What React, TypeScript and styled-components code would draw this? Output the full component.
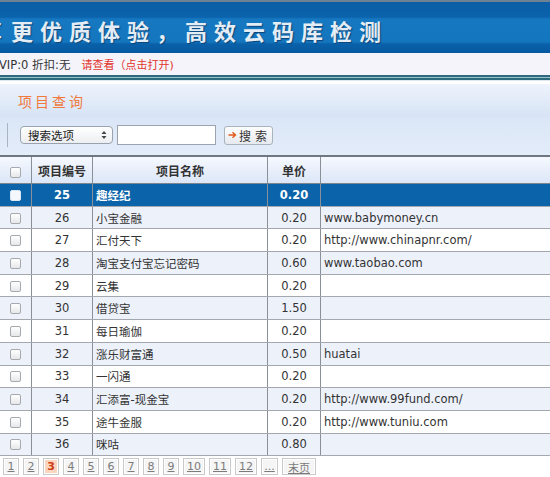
import React from 'react';
import styled, { createGlobalStyle } from 'styled-components';

const GlobalStyle = createGlobalStyle`
  html, body {
    margin: 0;
    padding: 0;
    background: #fff;
  }
  body {
    width: 550px;
    height: 477px;
    overflow: hidden;
    font-family: "DejaVu Sans", "Noto Sans CJK SC", sans-serif;
    font-size: 11.5px;
    color: #333;
  }
`;

const cjk = `"DejaVu Sans", "Noto Sans CJK SC", sans-serif`;

const Banner = styled.div`
  height: 53px;
  border-top: 2px solid #6d8393;
  background: linear-gradient(
    to bottom,
    #0b5ea5 0px,
    #0a63ac 15px,
    #1678c1 17px,
    #1476be 40px,
    #0a61a9 42px,
    #0659a0 51px,
    #7aa8cc 52px,
    #cfe0ee 53px
  );
  display: flex;
  align-items: center;
  padding-top: 4px;
  box-sizing: border-box;
  overflow: hidden;
`;

const BannerTitle = styled.div`
  margin-left: -20px;
  white-space: nowrap;
  font-family: "Noto Sans CJK SC", sans-serif;
  font-size: 22px;
  font-weight: 700;
  letter-spacing: 7px;
  color: #e4edf6;
  text-shadow: 1px 1px 1px #0a4478;
`;

const Lead = styled.span`
  margin-right: 2px;
`;

const InfoBar = styled.div`
  height: 22px;
  background: #f5f4fb;
  display: flex;
  align-items: center;
  gap: 11px;
  font-family: ${cjk};
  font-size: 11.5px;
  color: #333;
`;

const InfoText = styled.span`
  margin-left: -1px;
`;

const RedLink = styled.span`
  color: #e2332a;
  font-size: 11px;
`;

const Divider = styled.div`
  height: 6px;
  background: linear-gradient(
    to bottom,
    #2c6a7e 0px,
    #2c6a7e 2px,
    #9cc0cc 2px,
    #9cc0cc 3px,
    #2c6a7e 3px,
    #2c6a7e 5px,
    #dfe8ee 5px
  );
`;

const Gap = styled.div`
  height: 3px;
  background: #fff;
`;

const PanelHead = styled.div`
  height: 33px;
  background: linear-gradient(to bottom, #eef3fc, #d6e3f5);
  display: flex;
  align-items: center;
  padding-left: 18px;
  font-family: "Noto Sans CJK SC", sans-serif;
  font-size: 14px;
  letter-spacing: 3px;
  color: #f07a3c;
`;

const Toolbar = styled.div`
  height: 38px;
  background: linear-gradient(to bottom, #dae6f7, #e3ecf9);
  display: flex;
  align-items: center;
  box-sizing: border-box;
  padding-left: 7px;
  padding-bottom: 2px;
`;

const Separator = styled.span`
  width: 1px;
  height: 24px;
  background: #a9b4c2;
  margin-right: 12px;
`;

const SelectBox = styled.div`
  width: 93px;
  height: 18px;
  box-sizing: border-box;
  border: 1px solid #9aa3ad;
  border-radius: 4px;
  background: linear-gradient(to bottom, #ffffff, #eceef1);
  display: flex;
  align-items: center;
  justify-content: space-between;
  padding: 0 5px 0 7px;
  font-family: ${cjk};
  font-size: 11.5px;
  color: #222;
`;

const SearchInput = styled.div`
  width: 99px;
  height: 20px;
  box-sizing: border-box;
  margin-left: 4px;
  border: 1px solid #9ba4ae;
  background: #fff;
`;

const SearchButton = styled.div`
  margin-left: 8px;
  width: 49px;
  height: 19px;
  box-sizing: border-box;
  border: 1px solid #aab2bc;
  border-radius: 3px;
  background: linear-gradient(to bottom, #fdfdfe, #e6eaef);
  display: flex;
  align-items: center;
  justify-content: center;
  gap: 2px;
  padding-left: 2px;
  font-family: "Noto Sans CJK SC", sans-serif;
  font-size: 12px;
  letter-spacing: 4px;
  color: #333;
`;

const Table = styled.table`
  width: 550px;
  border-collapse: collapse;
  table-layout: fixed;
  border-top: 2px solid #6f7780;
`;

const HeadCell = styled.th<{ $w?: number }>`
  ${(p) => (p.$w ? `width: ${p.$w}px;` : '')}
  height: 26px;
  padding: 0;
  background: linear-gradient(to bottom, #f5f8fe, #dbe6f7);
  border-right: 1px solid #8a9098;
  border-bottom: 1px solid #7d848c;
  font-family: "Noto Sans CJK SC", sans-serif;
  font-size: 12px;
  font-weight: 700;
  color: #333;
  text-align: center;
  &:last-child {
    border-right: none;
  }
`;

const Row = styled.tr<{ $active?: boolean; $alt?: boolean }>`
  height: 22.7px;
  background: ${(p) => (p.$active ? '#0b63a9' : p.$alt ? '#edf1fa' : '#ffffff')};
  color: ${(p) => (p.$active ? '#ffffff' : '#333')};
  font-weight: ${(p) => (p.$active ? 700 : 400)};
`;

const Cell = styled.td<{ $align?: string }>`
  padding: 0 3px;
  border-right: 1px solid #8a9098;
  border-bottom: 1px solid #a3a8ae;
  text-align: ${(p) => p.$align || 'left'};
  white-space: nowrap;
  overflow: hidden;
  font-family: ${cjk};
  font-size: 11.5px;
  &:last-child {
    border-right: none;
  }
`;

const Check = styled.span<{ $active?: boolean }>`
  display: inline-block;
  vertical-align: middle;
  width: 9px;
  height: 9px;
  border: 1px solid ${(p) => (p.$active ? '#dbe7f3' : '#a6a9ad')};
  border-radius: 2px;
  background: ${(p) =>
    p.$active ? '#f4f7fb' : 'linear-gradient(to bottom, #ffffff, #e6e7e9)'};
`;

const Pager = styled.div`
  display: flex;
  gap: 4px;
  padding: 2px 0 0 3px;
`;

const PageBox = styled.span<{ $current?: boolean; $w?: number }>`
  min-width: ${(p) => p.$w || 12}px;
  height: 15px;
  padding: 0 1px;
  box-sizing: content-box;
  border: 1px solid #c9c9c9;
  box-shadow: inset 0 0 0 1px #ffffff;
  background: ${(p) => (p.$current ? '#fbd6bf' : '#f5f5f5')};
  display: flex;
  align-items: center;
  justify-content: center;
  font-family: ${cjk};
  font-size: 11px;
  color: ${(p) => (p.$current ? '#cc3b14' : '#7b7b7b')};
  font-weight: ${(p) => (p.$current ? 700 : 400)};
  text-decoration: ${(p) => (p.$current ? 'none' : 'underline')};
`;

type Item = { id: number; name: string; price: string; url: string };

const items: Item[] = [
  { id: 25, name: '趣经纪', price: '0.20', url: '' },
  { id: 26, name: '小宝金融', price: '0.20', url: 'www.babymoney.cn' },
  { id: 27, name: '汇付天下', price: '0.20', url: 'http://www.chinapnr.com/' },
  { id: 28, name: '淘宝支付宝忘记密码', price: '0.60', url: 'www.taobao.com' },
  { id: 29, name: '云集', price: '0.20', url: '' },
  { id: 30, name: '借贷宝', price: '1.50', url: '' },
  { id: 31, name: '每日瑜伽', price: '0.20', url: '' },
  { id: 32, name: '涨乐财富通', price: '0.50', url: 'huatai' },
  { id: 33, name: '一闪通', price: '0.20', url: '' },
  { id: 34, name: '汇添富-现金宝', price: '0.20', url: 'http://www.99fund.com/' },
  { id: 35, name: '途牛金服', price: '0.20', url: 'http://www.tuniu.com' },
  { id: 36, name: '咪咕', price: '0.80', url: '' },
];

const pages = ['1', '2', '3', '4', '5', '6', '7', '8', '9', '10', '11', '12', '...', '末页'];

const pageWidth = (p: string) => {
  if (p === '末页') return 30;
  if (p === '...') return 13;
  return p.length > 1 ? 18 : 12;
};

const SelectArrows = () => (
  <svg width="6" height="10" viewBox="0 0 6 10">
    <path d="M0.5 4 L3 1 L5.5 4 Z" fill="#444" />
    <path d="M0.5 6 L3 9 L5.5 6 Z" fill="#444" />
  </svg>
);

const ArrowIcon = () => (
  <svg width="9" height="8" viewBox="0 0 9 8">
    <path d="M0.5 4 H7 M4.5 1.2 L7.5 4 L4.5 6.8" stroke="#e05a1c" strokeWidth="1.4" fill="none" />
  </svg>
);

export default function App() {
  return (
    <>
      <GlobalStyle />
      <Banner>
        <BannerTitle>
          <Lead>享</Lead>更优质体验，高效云码库检测
        </BannerTitle>
      </Banner>
      <InfoBar>
        <InfoText>VIP:0 折扣:无</InfoText>
        <RedLink>请查看（点击打开)</RedLink>
      </InfoBar>
      <Divider />
      <Gap />
      <PanelHead>项目查询</PanelHead>
      <Toolbar>
        <Separator />
        <SelectBox>
          <span>搜索选项</span>
          <SelectArrows />
        </SelectBox>
        <SearchInput />
        <SearchButton>
          <ArrowIcon />
          搜索
        </SearchButton>
      </Toolbar>
      <Table>
        <thead>
          <tr>
            <HeadCell $w={31}>
              <Check />
            </HeadCell>
            <HeadCell $w={60}>项目编号</HeadCell>
            <HeadCell $w={174}>项目名称</HeadCell>
            <HeadCell $w={52}>单价</HeadCell>
            <HeadCell />
          </tr>
        </thead>
        <tbody>
          {items.map((it, i) => (
            <Row key={it.id} $active={i === 0} $alt={i % 2 === 1}>
              <Cell $align="center">
                <Check $active={i === 0} />
              </Cell>
              <Cell $align="center">{it.id}</Cell>
              <Cell>{it.name}</Cell>
              <Cell $align="center">{it.price}</Cell>
              <Cell>{it.url}</Cell>
            </Row>
          ))}
        </tbody>
      </Table>
      <Pager>
        {pages.map((p) => (
          <PageBox key={p} $current={p === '3'} $w={pageWidth(p)}>
            {p}
          </PageBox>
        ))}
      </Pager>
    </>
  );
}
